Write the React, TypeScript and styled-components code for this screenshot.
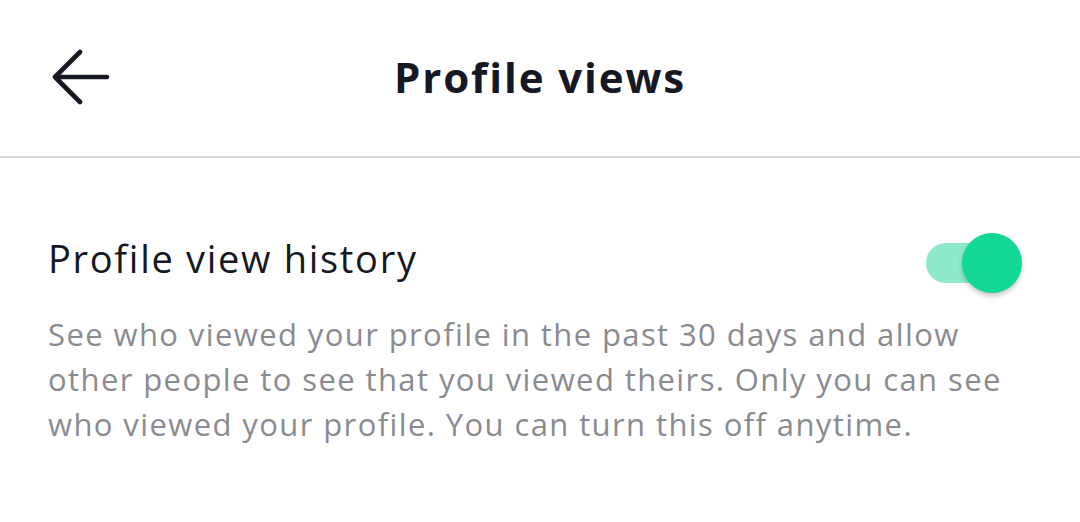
import React from "react";
import styled, { createGlobalStyle } from "styled-components";

const Global = createGlobalStyle`
  html, body { margin: 0; padding: 0; background: #ffffff; }
  body { font-family: "Open Sans", "Noto Sans", sans-serif; -webkit-font-smoothing: antialiased; }
`;

const Page = styled.div`
  width: 1080px;
  height: 522px;
  background: #fff;
  display: flex;
  flex-direction: column;
`;

const Header = styled.header`
  height: 156px;
  border-bottom: 2px solid #d6d6d6;
  display: grid;
  grid-template-columns: 160px 1fr 160px;
  align-items: center;
  box-sizing: content-box;
`;

const BackButton = styled.button`
  border: none;
  background: none;
  padding: 0 0 0 52px;
  margin: 0;
  display: flex;
  align-items: center;
  height: 60px;
  cursor: pointer;
`;

const Title = styled.h1`
  margin: 0 0 3px 0;
  text-align: center;
  font-family: "Open Sans", sans-serif;
  font-weight: 700;
  font-size: 42px;
  letter-spacing: 1.9px;
  color: #161823;
`;

const Section = styled.section`
  padding: 69px 58px 0 48px;
  display: flex;
  flex-direction: column;
`;

const Row = styled.div`
  display: flex;
  align-items: center;
  justify-content: space-between;
  height: 62px;
`;

const RowLabel = styled.span`
  font-size: 38px;
  letter-spacing: 1.7px;
  color: #161823;
  font-weight: 400;
`;

const Toggle = styled.div<{ $on: boolean }>`
  position: relative;
  width: 70px;
  height: 40px;
  border-radius: 20px;
  background: ${(p) => (p.$on ? "#8eeaca" : "#d6d6d6")};
  margin: 10px 26px 0 0;
`;

const Thumb = styled.div<{ $on: boolean }>`
  position: absolute;
  top: -10px;
  left: ${(p) => (p.$on ? "36px" : "-10px")};
  width: 60px;
  height: 60px;
  border-radius: 50%;
  background: #12d795;
  box-shadow: 0 3px 5px rgba(0, 0, 0, 0.22);
`;

const Description = styled.p`
  margin: 23px 0 0 0;
  font-size: 31px;
  line-height: 45px;
  letter-spacing: 1.4px;
  color: #8a8b91;
  font-weight: 400;
  white-space: nowrap;
`;

export default function App() {
  return (
    <Page>
      <Global />
      <Header>
        <BackButton aria-label="Back">
          <svg width="58" height="58" viewBox="0 0 58 58" fill="none">
            <path
              d="M28 3 L3 28 L28 53 M3 28 H55"
              stroke="#161823"
              strokeWidth="4.6"
              strokeLinecap="round"
              strokeLinejoin="round"
            />
          </svg>
        </BackButton>
        <Title>Profile views</Title>
        <div />
      </Header>
      <Section>
        <Row>
          <RowLabel>Profile view history</RowLabel>
          <Toggle $on>
            <Thumb $on />
          </Toggle>
        </Row>
        <Description>
          See who viewed your profile in the past 30 days and allow
          <br />
          other people to see that you viewed theirs. Only you can see
          <br />
          who viewed your profile. You can turn this off anytime.
        </Description>
      </Section>
    </Page>
  );
}
